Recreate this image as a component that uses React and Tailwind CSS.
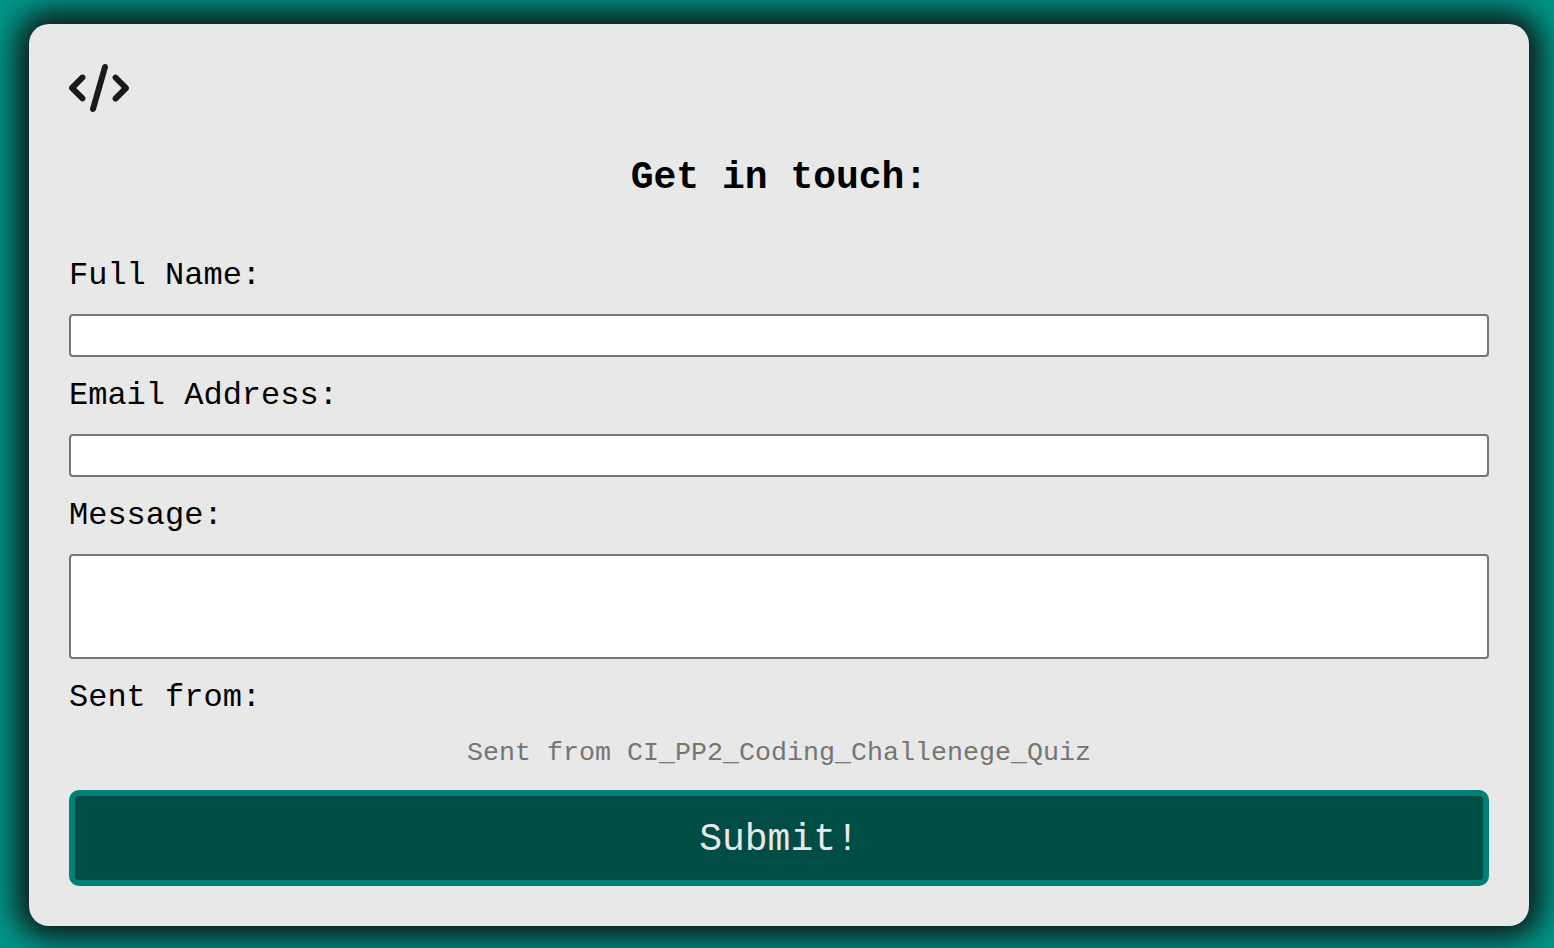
import { FaCode } from "react-icons/fa6";

const label = "block text-[32px] leading-9";
const field = "block w-full resize-none rounded-[4px] border-2 border-[#767676] bg-white outline-none";

export default function App() {
  return (
    <div className="h-[948px] overflow-hidden bg-[#009688] pt-6 pl-[29px] font-['Courier_New','Liberation_Mono',monospace] text-black">
      <main className="h-[902px] w-[1500px] rounded-[20px] bg-[#e8e8e8] px-10 pt-10 shadow-[0_0_30px_12px_#0f1414]">
        <FaCode className="h-12 w-[60px] text-[#1a1a1a]" />
        <h1 className="mt-[43px] text-center text-[38px] leading-[46px] font-bold">Get in touch:</h1>
        <form className="mt-[57px]">
          <label className={label}>Full Name:</label>
          <input className={`${field} mt-5 h-[43px]`} />
          <label className={`${label} mt-[21px]`}>Email Address:</label>
          <input className={`${field} mt-5 h-[43px]`} />
          <label className={`${label} mt-[21px]`}>Message:</label>
          <textarea className={`${field} mt-5 h-[105px]`} />
          <label className={`${label} mt-[21px]`}>Sent from:</label>
          <p className="mt-[22px] text-center text-[26.67px] leading-[30px] text-[#757575]">Sent from CI_PP2_Coding_Challenege_Quiz</p>
          <button type="button" className="mt-[22px] block h-24 w-full rounded-[10px] border-[6px] border-[#008075] bg-[#004d45] pt-0.5 text-[38px] text-[#e8e8e8]">Submit!</button>
        </form>
      </main>
    </div>
  );
}
